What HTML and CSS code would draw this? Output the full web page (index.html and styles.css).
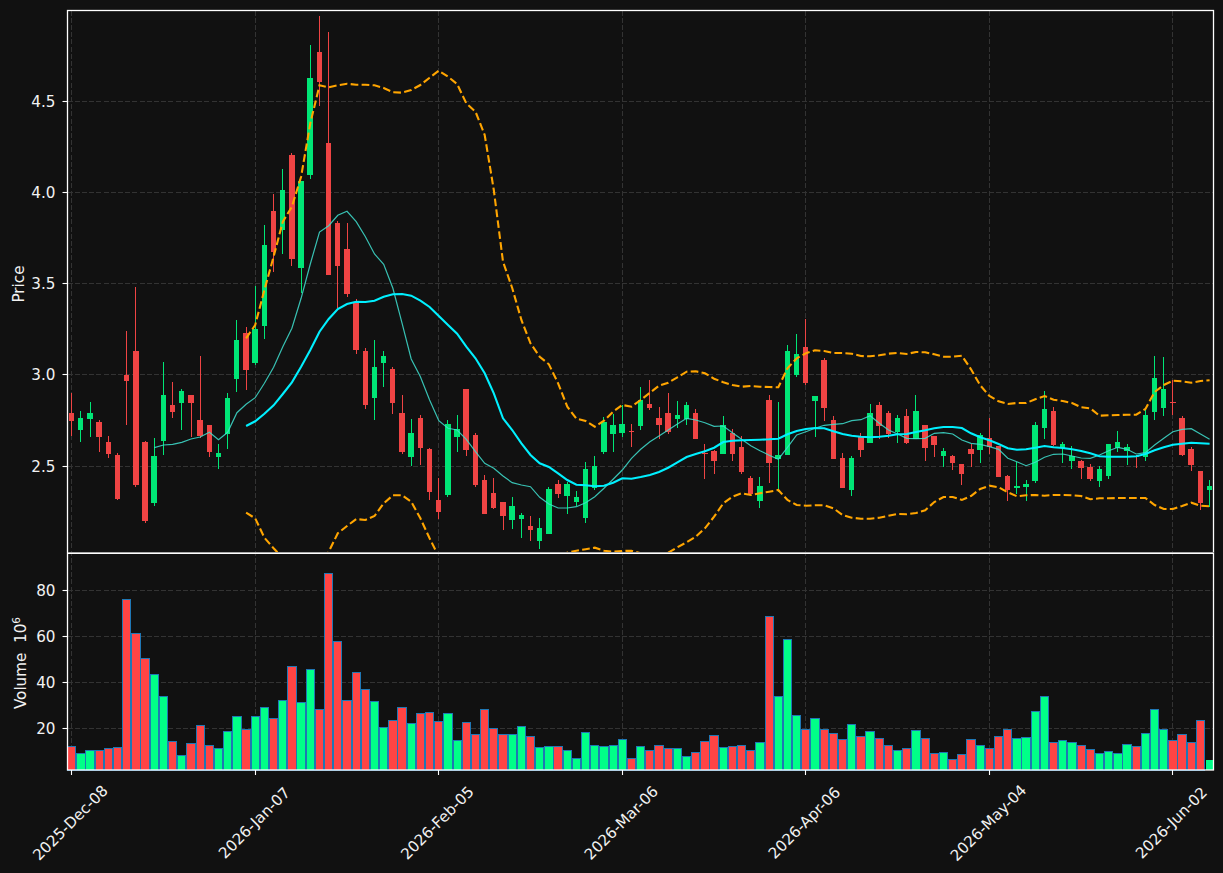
FILE: index.html
```html
<!DOCTYPE html>
<html lang="en">
<head>
<meta charset="utf-8">
<title>Price and volume chart</title>
<link rel="stylesheet" href="styles.css">
</head>
<body>
<main class="figure">
<svg id="chart" class="chart" width="1223" height="873" viewBox="0 0 1223 873" xmlns="http://www.w3.org/2000/svg"></svg>
</main>
<script src="script.js"></script>
</body>
</html>
```
FILE: styles.css
```css
html, body { margin: 0; padding: 0; background: #111111; }
.figure { width: 1223px; height: 873px; overflow: hidden; }
.chart { display: block; }
.grid { stroke: #333333; stroke-width: 1; stroke-dasharray: 5 2.2; fill: none; shape-rendering: crispEdges; }
.spine { stroke: #ffffff; stroke-width: 1.3; fill: none; }
.seam { stroke: #aaaaaa; stroke-width: 1; shape-rendering: crispEdges; }
.seam-bright { stroke: #ffffff; stroke-width: 1; shape-rendering: crispEdges; }
.tick { stroke: #ffffff; stroke-width: 1.1; }
.label { fill: #f2f2f2; font-family: "DejaVu Sans", sans-serif; font-size: 15.2px; }
.sup { font-size: 10.6px; }
.up { fill: #00e676; }
.down { fill: #ef4444; }
.bar { stroke: #1f77b4; stroke-width: 1; shape-rendering: crispEdges; }
.bar-up { fill: #00ff88; }
.bar-down { fill: #ff4444; }
.bar-last { stroke: none; }
.crisp { shape-rendering: crispEdges; }
.ma-fast { fill: none; stroke: #40e0d0; stroke-width: 1.2; stroke-opacity: 0.85; }
.ma-slow { fill: none; stroke: #00f0ff; stroke-width: 2.1; }
.band { fill: none; stroke: #ffa500; stroke-width: 2.1; stroke-dasharray: 7.7 3.3; }
```
FILE: script.js
```js
var NS = "http://www.w3.org/2000/svg";
var svg = document.getElementById("chart");
var X0 = 71.7, DX = 9.177, L = 67.5, R = 1213.5, T = 10.5, MID = 553, B = 770;
function xOf(i) { return X0 + DX * i; }
function el(name, attrs, parent) {
  var n = document.createElementNS(NS, name);
  for (var k in attrs) n.setAttribute(k, attrs[k]);
  (parent || svg).appendChild(n);
  return n;
}
var defs = el("defs", {});
var clip = el("clipPath", { id: "price-clip" }, defs);
el("rect", { x: L, y: T, width: R - L, height: MID - T }, clip);

function seg(base, rows) {
  return rows.map(function (r) {
    return { c: r[0], hi: base + r[1] / 3, top: base + r[2] / 3, bot: base + r[3] / 3, lo: base + r[4] / 3 };
  });
}
var g = "up", d = "down";
var candles = [].concat(
  seg(270, [
    [d,370,429,452,498],[g,424,444,480,517],[g,397,429,447,500],[d,451,456,500,545],[d,499,516,552,565],
    [d,550,555,687,691],[d,184,315,332,466],[d,52,243,645,652],[d,512,516,753,758],[g,505,558,698,709],
    [g,277,375,513,556],[d,337,405,426,445],[g,358,363,399,479],[d,375,375,399,500],[d,259,450,498,505],
    [d,465,465,545,560],[g,523,549,561,598],[g,370,384,492,538],[g,151,210,327,365],[d,172,189,300,359],
    [g,48,178,279,285]
  ]),
  seg(0, [
    [g,676,735,977,1016],[d,583,633,755,815],[g,508,570,690,763],[d,460,465,777,797],[g,543,543,803,880],
    [g,136,234,525,536],[d,49,156,246,317],[d,97,429,825,825],[d,663,669,797,925]
  ]),
  seg(180, [
    [d,130,207,342,350],[d,358,365,510,523],[d,505,513,675,686],[g,481,561,654,721],[g,514,528,549,622],
    [d,562,567,669,701],[d,646,699,816,821],[g,718,759,831,859],[d,705,714,804,854],[d,805,807,936,961],
    [d,895,960,996,1017],[g,721,732,945,952],[g,706,747,771,815],[d,627,627,810,828],[d,760,765,915,920],
    [d,886,900,1002,1003],[d,895,939,984,988],[d,966,966,1008,1049],[g,952,978,1020,1047],[g,1000,1005,1017,1073],
    [d,1008,1038,1050,1082],[g,1015,1044,1083,1106],[g,920,927,1062,1062],[d,901,912,942,953],[g,905,912,948,1001],
    [g,934,951,966,978],[g,847,867,1014,1028],[g,829,858,924,929],[g,712,726,816,821],[g,702,735,762,815]
  ]),
  seg(330, [
    [g,225,282,309,320],[d,282,303,305,350],[g,172,210,288,299],[d,151,222,234,239],[d,232,264,285,326],
    [d,190,249,306,311],[g,213,255,267,293],[g,217,225,267,284],[d,238,249,327,327],[d,342,369,371,446],
    [d,360,363,393,431],[g,258,285,372,372],[d,298,309,372,392],[d,318,351,426,431],[d,438,444,492,492],
    [g,442,468,513,533],[d,195,210,399,458],[g,217,375,387,486],[g,45,63,375,376],[g,12,72,135,140],
    [d,-33,51,159,165],[g,198,198,213,320],[d,85,90,234,272],[d,259,270,387,387],[d,370,384,474,474],
    [g,379,384,480,497],[d,310,321,360,380],[g,222,249,339,339],[d,216,225,288,326],[d,243,249,312,324],
    [g,255,264,306,339],[d,237,258,339,342],[g,195,243,327,327],[d,285,285,354,392],[d,318,318,345,381],
    [g,355,363,378,410],[d,375,378,399,419],[d,402,402,432,464],[d,343,357,372,410],[g,310,315,360,399],
    [d,265,324,352,372],[d,348,348,441,441],[d,435,438,480,512],[g,396,468,474,492],[g,450,462,471,512],
    [g,277,285,453,458],[g,184,237,294,326],[d,232,243,345,349],[g,336,342,354,398],[g,349,378,393,418],
    [d,390,393,414,446],[d,403,411,447,453],[g,408,417,453,470],[g,342,342,438,446],[g,304,336,354,366],
    [g,342,351,363,404],[d,375,378,380,413],[g,240,255,381,392],[g,79,144,246,269],[g,81,177,234,257],
    [d,150,216,218,256],[d,258,264,375,378],[d,351,357,405,424],[d,423,423,519,539],[g,450,468,480,531]
  ])
);

var volume = [
  [d,589],[g,610],[g,601],[d,601],[d,595],[d,592],[d,148],[d,250],[d,325],[g,373],
  [g,439],[d,574],[g,616],[d,580],[d,526],[d,586],[g,595],[g,544],[g,499],[d,538],
  [g,499],[g,472],[d,505],[g,451],[d,349],[g,457],[g,358],[d,478],[d,70],[d,274],
  [d,451],[d,367],[d,418],[g,454],[g,532],[d,511],[d,472],[g,520],[d,490],[d,487],
  [d,514],[g,490],[g,571],[d,517],[d,553],[d,478],[d,535],[d,553],[g,553],[g,529],
  [d,559],[g,592],[g,589],[d,589],[g,601],[g,625],[g,547],[g,586],[g,589],[g,586],
  [g,568],[d,625],[g,589],[d,601],[d,586],[d,595],[g,595],[g,619],[d,607],[d,574],
  [d,556],[g,592],[d,589],[d,586],[d,601],[g,577],[d,199],[g,439],[g,268],[g,496],
  [d,538],[g,505],[d,538],[d,550],[d,568],[g,523],[d,559],[g,544],[d,565],[d,586],
  [g,601],[d,595],[g,541],[d,565],[d,610],[g,607],[d,628],[d,613],[d,568],[g,586],
  [d,595],[d,559],[d,538],[g,565],[g,562],[g,484],[g,439],[d,577],[g,571],[g,577],
  [d,586],[d,598],[g,610],[g,604],[g,610],[g,583],[d,589],[g,550],[g,478],[g,538],
  [d,571],[d,553],[d,577],[d,511],[g,628]
];

var maFast = [447.7,445,444.3,442.3,439,437,432.3,439.7,432.3,412.7,404.3,397.7,383.3,367.3,346.7,328.3,298.3,264,232,225.7,215.3,211.3,221.7,236.7,254,264.3,288.3,323.3,359,376.7,400,420.7,428.3,430,439.3,451.7,463.3,468.3,476,482.7,485,486.7,497.3,504,508,508,506.7,502.7,496.7,488.3,479.3,470,458.3,449.3,441.7,436,430,424,418.3,420,422.7,426.3,426,432.7,439.3,445.7,450.7,455.3,459.3,447.3,435,431.7,428.3,425.3,424.3,423.7,420.7,419.7,415.7,423.3,430,434,438.3,438.7,438.3,433.3,432.7,434,440,443.3,444.3,446.7,449.3,458.3,461.7,465.7,462.3,457.3,454.3,454,456,458,458.3,455,450.7,447.3,449.3,454,452.7,445,438.3,431.7,429.3,428.7,434,439.3];
var maSlow = [426,421.3,413.7,405.3,394,382.3,366.7,350,331.7,319,309,304,301.7,302,300.7,296.7,294.3,294,295.7,300.7,307,316,325,333.7,346.7,358.3,373.3,393.3,418.3,430,443.3,455,463.3,467,473.3,480,484.7,485.3,486.3,485.7,482.7,478.3,478.7,477,475,472,467.7,462.3,457,454,451.3,447.7,442,440.7,440.3,440,439.7,439.3,438.7,434.3,431,429,428,428.3,431.3,434,435.7,436.7,437.3,436.7,435.7,434.3,434,432,430.3,428.3,427,427,428,433.3,437.3,440.3,444,448.3,449.7,449.3,447.7,446,447.3,448,449.3,451,453.3,456.3,456.7,456.7,456.7,456.3,454,450.3,447.3,444.7,443.7,442.7,443.3,443.7];
var upper = [338.3,325,290,256.7,221.7,206.7,176.7,123.3,85.3,87.3,85.3,83.7,84.7,84.7,85.3,88,92.3,92.7,90,85,77.7,70.7,76.7,84,103.3,111.7,135,190,261.7,288,320,343.3,356.7,364.3,383.3,406.7,418.7,421,426.7,420.7,411.7,405,406.7,400,392.7,385.7,382.7,377.3,371.7,371.3,373.3,378.7,382.3,385,386.7,386,386.7,387,387.3,368.3,358.3,353.3,350.3,351,353,353,353.7,356,356.3,355.3,353.7,353,354,352,352.3,354.3,356.7,356.7,355.7,369.3,385.3,396,401.3,404,403,403,399.3,396,399.7,401,403,407.3,408.3,415.7,415.3,415,414.7,414.7,409,392,385,380.7,381.3,382.7,381,380.3];
var lower = [512.7,518.3,537.7,548.3,558,568,575,580,568,551.7,533.3,526,519,520,516,503.3,495.3,495.3,501.7,518.3,538.3,556.7,575,600,625,650,660,665,665,660,650,640,625,600,575,552.7,550.7,549.3,547.7,550.7,551.7,551,550.7,553.3,556,556,552.7,547.3,542.3,536.7,528.3,516.7,503.3,496.7,493.3,495,493.3,491.7,490,500,505,505.7,505.3,505.3,508.3,515,517.7,518.7,518.7,517.7,515.7,514,514.3,513,510.3,502,497,497,500,496,489,485.7,487.3,492.3,496.3,495.3,495,495.7,495,495,495.3,496,499.3,498.3,498.3,498,498,498,498,505,509,509,506,502.7,505.7,506.3];

var ticks = [[0,"2025-Dec-08"],[20,"2026-Jan-07"],[40,"2026-Feb-05"],[60,"2026-Mar-06"],[80,"2026-Apr-06"],[100,"2026-May-04"],[120,"2026-Jun-02"]];
var priceTicks = [[101.5,"4.5"],[192.5,"4.0"],[283.5,"3.5"],[374.5,"3.0"],[466.5,"2.5"]];
var volTicks = [[590.5,"80"],[636.5,"60"],[682.5,"40"],[728.5,"20"]];

var gridLayer = el("g", {});
ticks.forEach(function (t) {
  var x = Math.floor(xOf(t[0])) + 0.5;
  el("line", { x1: x, x2: x, y1: T, y2: B, "class": "grid" }, gridLayer);
});
priceTicks.concat(volTicks).forEach(function (t) {
  el("line", { x1: L, x2: R, y1: t[0], y2: t[0], "class": "grid" }, gridLayer);
});

var candleLayer = el("g", {});
candles.forEach(function (c, i) {
  var cx = xOf(i);
  var w = Math.floor(cx);
  el("rect", { x: w, y: c.hi, width: 1, height: Math.max(c.lo - c.hi, 0), "class": c.c + " crisp" }, candleLayer);
  var left = Math.round(cx - 2.85), right = Math.round(cx + 2.6);
  el("rect", { x: left, y: c.top, width: right - left, height: Math.max(c.bot - c.top, 1), "class": c.c + " crisp" }, candleLayer);
});

function linePath(values, start, cls, clipped) {
  var pts = values.map(function (y, i) { return xOf(start + i).toFixed(1) + "," + y; }).join(" ");
  var attrs = { points: pts, "class": cls };
  if (clipped) attrs["clip-path"] = "url(#price-clip)";
  el("polyline", attrs);
}
linePath(maFast, 9, "ma-fast");
linePath(maSlow, 19, "ma-slow");
linePath(upper, 19, "band", true);
linePath(lower, 19, "band", true);

var barLayer = el("g", {});
volume.forEach(function (v, i) {
  var y = Math.round(550 + v[1] / 3) + 0.5;
  var last = i === volume.length - 1;
  el("rect", {
    x: xOf(i) - 4.13, y: y, width: 8.26, height: B - y,
    "class": "bar bar-" + v[0] + (last ? " bar-last" : "")
  }, barLayer);
});

el("rect", { x: L, y: T, width: R - L, height: B - T, "class": "spine" });
el("line", { x1: L, x2: R, y1: 552.5, y2: 552.5, "class": "seam" });
el("line", { x1: L, x2: R, y1: 553.5, y2: 553.5, "class": "seam-bright" });

function yTick(t, labelX) {
  el("line", { x1: L - 5, x2: L, y1: t[0], y2: t[0], "class": "tick" });
  var n = el("text", { x: labelX, y: t[0] + 0.8, "text-anchor": "end", "dominant-baseline": "central", "class": "label" });
  n.textContent = t[1];
}
priceTicks.forEach(function (t) { yTick(t, 55.5); });
volTicks.forEach(function (t) { yTick(t, 55.5); });

ticks.forEach(function (t) {
  var x = Math.floor(xOf(t[0])) + 0.5;
  el("line", { x1: x, x2: x, y1: B, y2: B + 5, "class": "tick" });
  var cx = x - 1, cy = 823;
  var n = el("text", { x: cx, y: cy, "text-anchor": "middle", "dominant-baseline": "central", "class": "label", transform: "rotate(-45 " + cx + " " + cy + ")" });
  n.textContent = t[1];
});

var price = el("text", { x: 24, y: 284, "text-anchor": "middle", "class": "label", transform: "rotate(-90 24 284)" });
price.textContent = "Price";
var vol = el("text", { x: 25.5, y: 663, "text-anchor": "middle", "class": "label", transform: "rotate(-90 25.5 663)" });
vol.appendChild(document.createTextNode("Volume  10"));
vol.setAttribute("xml:space", "preserve");
vol.style.whiteSpace = "pre";
var sup = el("tspan", { dy: -6, "class": "sup" }, vol);
sup.textContent = "6";
```
